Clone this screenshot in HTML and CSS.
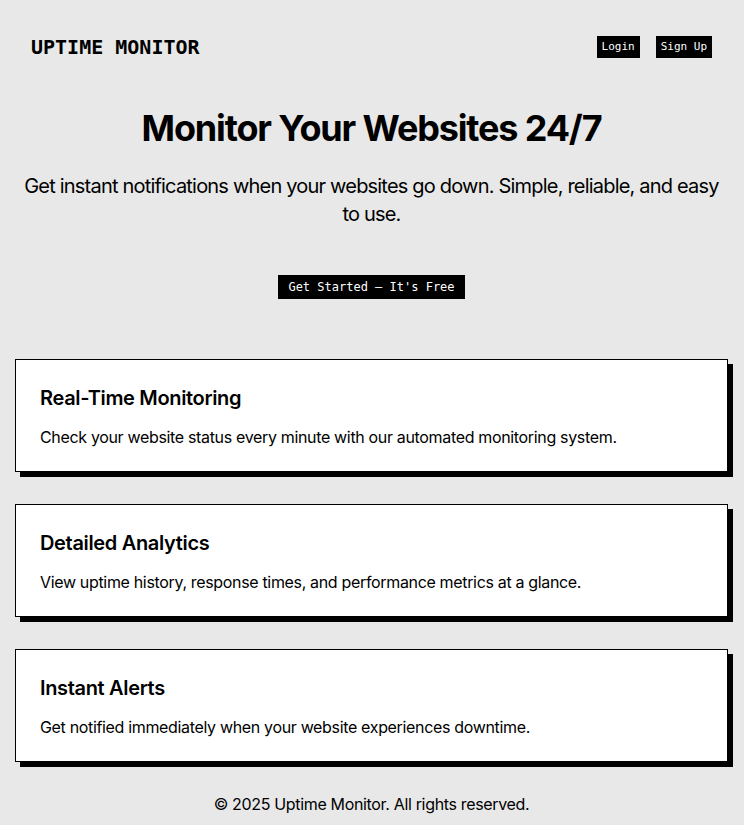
FILE: index.html
```html
<!DOCTYPE html>
<html lang="en">
<head>
<meta charset="utf-8">
<title>Uptime Monitor</title>
<link rel="stylesheet" href="styles.css">
</head>
<body>
<div class="page">
  <header class="header">
    <div class="logo">UPTIME MONITOR</div>
    <nav class="nav">
      <a class="btn-small" href="#">Login</a>
      <a class="btn-small" href="#">Sign Up</a>
    </nav>
  </header>
  <section class="hero">
    <h1 class="hero-title">Monitor Your Websites 24/7</h1>
    <p class="hero-sub">Get instant notifications when your websites go down. Simple, reliable, and easy to use.</p>
    <a class="btn-cta" href="#">Get Started – It's Free</a>
  </section>
  <section class="features">
    <div class="card">
      <h2 class="card-title">Real-Time Monitoring</h2>
      <p class="card-text">Check your website status every minute with our automated monitoring system.</p>
    </div>
    <div class="card">
      <h2 class="card-title">Detailed Analytics</h2>
      <p class="card-text">View uptime history, response times, and performance metrics at a glance.</p>
    </div>
    <div class="card">
      <h2 class="card-title">Instant Alerts</h2>
      <p class="card-text">Get notified immediately when your website experiences downtime.</p>
    </div>
  </section>
  <footer class="footer">© 2025 Uptime Monitor. All rights reserved.</footer>
</div>
</body>
</html>
```
FILE: styles.css
```css
html, body {
  margin: 0;
  padding: 0;
  background: #e8e8e8;
  color: #000;
  font-family: Inter, "Noto Sans", sans-serif;
  letter-spacing: -0.021em;
}
.page {
  padding: 0 16px 0 15px;
}
.header {
  display: flex;
  justify-content: space-between;
  align-items: center;
  padding: 36px 16px 0 16px;
  height: 22px;
}
.logo {
  font-family: "DejaVu Sans Mono", monospace;
  font-weight: bold;
  font-size: 20px;
  letter-spacing: 0;
}
.nav {
  display: flex;
  gap: 16px;
}
.btn-small {
  display: block;
  background: #000;
  color: #fff;
  text-decoration: none;
  font-family: "DejaVu Sans Mono", monospace;
  font-size: 11px;
  letter-spacing: 0;
  line-height: 22px;
  padding: 0 5px;
}
.hero {
  text-align: center;
  padding-top: 48px;
}
.hero-title {
  font-size: 36px;
  font-weight: 700;
  margin: 0;
  line-height: 44px;
  letter-spacing: -0.032em;
}
.hero-sub {
  font-size: 20px;
  line-height: 28px;
  margin: 22px 0 0 0;
  letter-spacing: -0.04em;
}
.btn-cta {
  display: inline-block;
  margin-top: 47px;
  background: #000;
  color: #fff;
  text-decoration: none;
  font-family: "DejaVu Sans Mono", monospace;
  font-size: 12px;
  letter-spacing: 0;
  line-height: 24px;
  padding: 0 10px;
}
.features {
  display: flex;
  flex-direction: column;
  gap: 32px;
  margin-top: 60px;
}
.card {
  background: #fff;
  border: 1px solid #000;
  box-shadow: 5px 5px 0 #000;
  padding: 25px 24px 24px 24px;
  height: 113px;
  box-sizing: border-box;
}
.card-title {
  margin: 0;
  font-size: 20px;
  font-weight: 600;
  line-height: 26px;
}
.card-text {
  margin: 14px 0 0 0;
  font-size: 16px;
  line-height: 24px;
}
.footer {
  text-align: center;
  font-size: 16px;
  padding-top: 32px;
}
```
